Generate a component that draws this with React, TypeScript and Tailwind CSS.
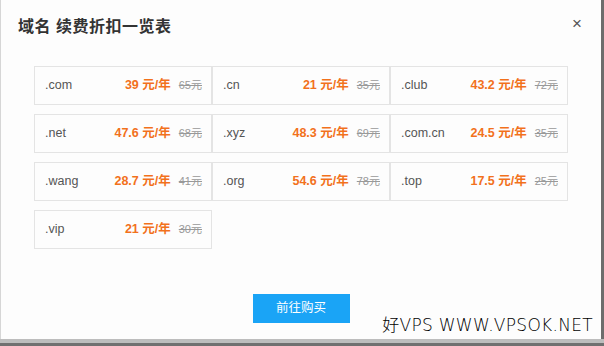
import React from 'react';

interface Item {
  tld: string;
  price: string;
  old: string;
}

const items: Item[] = [
  { tld: '.com', price: '39 元/年', old: '65元' },
  { tld: '.cn', price: '21 元/年', old: '35元' },
  { tld: '.club', price: '43.2 元/年', old: '72元' },
  { tld: '.net', price: '47.6 元/年', old: '68元' },
  { tld: '.xyz', price: '48.3 元/年', old: '69元' },
  { tld: '.com.cn', price: '24.5 元/年', old: '35元' },
  { tld: '.wang', price: '28.7 元/年', old: '41元' },
  { tld: '.org', price: '54.6 元/年', old: '78元' },
  { tld: '.top', price: '17.5 元/年', old: '25元' },
  { tld: '.vip', price: '21 元/年', old: '30元' },
];

export default function App() {
  return (
    <div
      className="w-[604px] h-[346px] bg-[#8a8a8a] flex flex-col overflow-hidden"
      style={{ fontFamily: '"Liberation Sans", Arial, "Noto Sans CJK SC", sans-serif' }}
    >
      <div className="flex flex-1">
        <div className="flex-1 bg-[#fdfdfd] border-l border-[#d6d6d6] flex flex-col relative">
          {/* header */}
          <div className="flex items-center justify-between h-[54px] pl-[17px] pr-[19px]">
            <h2 className="text-[16px] font-bold text-[#333] tracking-[0.5px]">域名 续费折扣一览表</h2>
            <span className="text-[17px] text-[#555] leading-none mb-[8px]">×</span>
          </div>

          {/* grid */}
          <div className="grid grid-cols-3 gap-y-[9px] mx-[33px] mt-[12px] w-[534px]">
            {items.map((it) => (
              <div
                key={it.tld}
                className="h-[39px] border border-[#e4e4e4] flex items-center pl-[10px] pr-[9px] text-[12px]"
              >
                <span className="text-[#555] text-[12.5px] flex-1">{it.tld}</span>
                <span className="text-[#f2711c] font-bold text-[12.5px]">{it.price}</span>
                <span className="text-[#999] line-through text-[11px] ml-[8px]">{it.old}</span>
              </div>
            ))}
          </div>

          <div className="flex justify-center mt-[45px]">
            <button className="w-[97px] h-[29px] bg-[#1aa4f6] text-white text-[12.5px]">前往购买</button>
          </div>

          <div
            className="absolute right-[8px] bottom-[1px] text-[17px] text-black tracking-[0.3px]"
            style={{ fontFamily: '"DejaVu Sans", "Noto Sans CJK SC", sans-serif', fontWeight: 300 }}
          >
            好VPS WWW.VPSOK.NET
          </div>
        </div>
        <div className="w-[4px] bg-[#6d6d6d]" />
      </div>
      <div className="h-[7px] bg-[#bdbdbd] border-b-[3px] border-[#707070]" />
    </div>
  );
}
